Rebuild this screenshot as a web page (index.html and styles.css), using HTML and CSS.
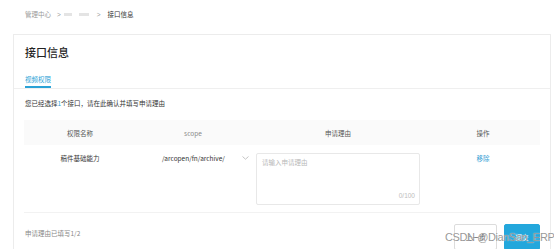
FILE: index.html
```html
<!DOCTYPE html>
<html>
<head>
    <title>接口信息</title>
    <link rel="stylesheet" href="styles.css">
</head>
<body>
    <div class="breadcrumb">
        <span class="crumb">管理中心</span>
        <span class="sep">&gt;</span>
        <span class="blurred"><i></i><i class="wide"></i></span>
        <span class="sep sep-last">&gt;</span>
        <span class="crumb current">接口信息</span>
    </div>

    <div class="card">
        <div class="card-head">
            <h1 class="title">接口信息</h1>
            <div class="tabs">
                <span class="tab active">视频权限</span>
            </div>
        </div>

        <div class="card-body">
            <p class="info">您已经选择<span class="num">1</span>个接口，请在此确认并填写申请理由</p>

            <div class="table">
                <div class="table-row table-head">
                    <div class="cell col-name">权限名称</div>
                    <div class="cell col-scope">scope</div>
                    <div class="cell col-reason">申请理由</div>
                    <div class="cell col-op">操作</div>
                </div>
                <div class="table-row">
                    <div class="cell col-name">稿件基础能力</div>
                    <div class="cell col-scope">
                        <div class="select">
                            <span>/arcopen/fn/archive/</span>
                            <svg class="chevron" width="7" height="4" viewBox="0 0 7 4">
                                <polyline points="0.5,0.5 3.5,3.2 6.5,0.5" fill="none" stroke="#b5b5b5" stroke-width="0.8"/>
                            </svg>
                        </div>
                    </div>
                    <div class="cell col-reason">
                        <div class="textarea">
                            <span class="placeholder">请输入申请理由</span>
                            <span class="counter">0/100</span>
                        </div>
                    </div>
                    <div class="cell col-op"><a class="link">移除</a></div>
                </div>
            </div>

            <div class="footer">
                <span class="filled">申请理由已填写1/2</span>
                <div class="actions">
                    <button class="btn">上一步</button>
                    <button class="btn btn-primary">提交</button>
                </div>
            </div>
        </div>
    </div>

    <div class="watermark">CSDN @DianSan_ERP</div>
</body>
</html>
```

FILE: styles.css
```css
body {
    margin: 0;
    background-color: #ffffff;
    font-family: "Noto Sans CJK SC", "Noto Sans", sans-serif;
    font-size: 6.5px;
    color: #333333;
    overflow: hidden;
}

.breadcrumb {
    display: flex;
    align-items: center;
    height: 28px;
    padding-left: 25px;
    margin-bottom: 6px;
    color: #9a9a9a;
}

.sep {
    margin: 0 3px 0 6px;
    font-family: "Liberation Sans", sans-serif;
}

.sep-last {
    margin: 0 7px 0 8px;
}

.blurred {
    display: flex;
    gap: 7px;
}

.blurred i {
    display: block;
    width: 8px;
    height: 3px;
    background-color: #e4e4e4;
}

.blurred i.wide {
    width: 10px;
}

.current {
    color: #333333;
}

.card {
    margin: 0 3px 0 13px;
    border: 1px solid #ececec;
    border-bottom: none;
    height: 220px;
}

.card-head {
    padding: 10px 10px 0 11px;
    border-bottom: 1px solid #efefef;
}

.title {
    margin: 0;
    font-size: 11px;
    font-weight: 500;
    line-height: 14px;
    color: #222222;
}

.tabs {
    display: flex;
    margin-top: 15px;
}

.tab {
    line-height: 10px;
    padding-bottom: 2px;
}

.tab.active {
    color: #2ba2d6;
    border-bottom: 2px solid #2ba2d6;
}

.card-body {
    padding: 0 10px;
}

.info {
    margin: 9px 0 12px 1px;
    line-height: 10px;
}

.num {
    color: #2ba2d6;
}

.table-row {
    display: flex;
    border-bottom: 1px solid #f2f2f2;
}

.table-head {
    height: 25px;
    align-items: center;
    background-color: #fafafa;
    border-bottom: none;
    color: #555555;
}

.cell {
    line-height: 10px;
    text-align: center;
}

.table-row:not(.table-head) .cell {
    padding: 8px 0 7px;
}

.col-name {
    width: 112px;
}

.col-scope {
    width: 114px;
}

.table-head .col-scope {
    color: #8a8a8a;
}

.col-reason {
    width: 176px;
}

.col-op {
    width: 114px;
}

.select {
    display: flex;
    align-items: center;
    padding: 0 1px 0 26px;
    text-align: left;
}

.chevron {
    margin-left: auto;
}

.textarea {
    position: relative;
    height: 50px;
    margin: 0 6px;
    border: 1px solid #e8e8e8;
    border-radius: 2px;
    text-align: left;
}

.placeholder {
    display: block;
    padding: 3px 5px;
    color: #b8b8b8;
}

.counter {
    position: absolute;
    right: 4px;
    bottom: 3px;
    color: #bdbdbd;
    font-family: "Liberation Sans", sans-serif;
}

.link {
    color: #3a9fd5;
}

.footer {
    display: flex;
    justify-content: space-between;
    align-items: flex-start;
    margin-top: 11px;
}

.filled {
    line-height: 18px;
    color: #888888;
    padding-left: 1px;
}

.actions {
    display: flex;
    gap: 7px;
}

.btn {
    height: 26px;
    padding: 0;
    border: 1px solid #dcdcdc;
    border-radius: 2px;
    background-color: #ffffff;
    font-family: inherit;
    font-size: 6.5px;
    line-height: 18px;
    color: #333333;
    width: 43px;
}

.btn-primary {
    width: 36px;
    background-color: #23a7dc;
    border-color: #23a7dc;
    color: #ffffff;
}

.watermark {
    position: absolute;
    left: 445px;
    top: 231px;
    font-family: "Liberation Sans", sans-serif;
    font-size: 11px;
    letter-spacing: -0.4px;
    color: rgba(125, 125, 125, 0.8);
    text-shadow: 0 0 1px #ffffff;
    white-space: nowrap;
}
```
